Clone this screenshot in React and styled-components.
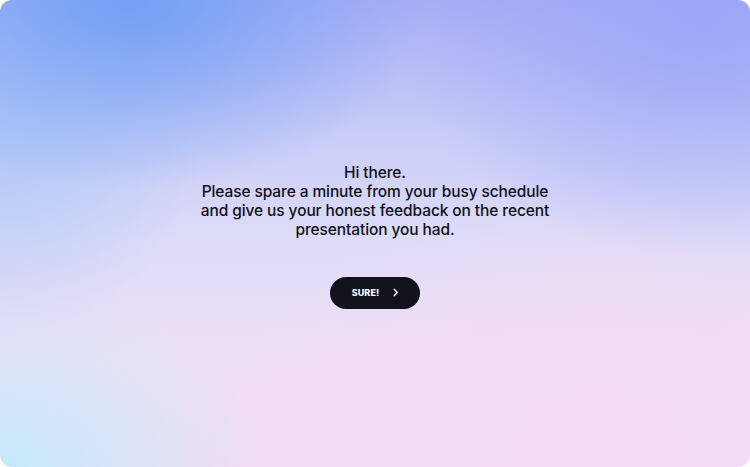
import React from 'react';
import styled, { createGlobalStyle } from 'styled-components';

const Global = createGlobalStyle`
  html, body { margin: 0; padding: 0; background: #ffffff; }
  #root { width: 750px; height: 467px; }
`;

const Screen = styled.div`
  width: 750px;
  height: 467px;
  border-radius: 12px;
  overflow: hidden;
  display: flex;
  flex-direction: column;
  align-items: center;
  justify-content: center;
  box-sizing: border-box;
  padding-top: 4px;
  background:
    radial-gradient(ellipse 300px 190px at 130px 0px, rgba(112, 160, 245, 0.95), rgba(112, 160, 245, 0) 100%),
    radial-gradient(ellipse 200px 200px at 0px 140px, rgba(170, 200, 248, 0.8), rgba(170, 200, 248, 0) 100%),
    radial-gradient(ellipse 300px 240px at 700px 20px, rgba(152, 164, 247, 0.85), rgba(152, 164, 247, 0) 100%),
    radial-gradient(ellipse 260px 180px at 0px 467px, rgba(196, 234, 250, 1), rgba(196, 234, 250, 0) 100%),
    radial-gradient(ellipse 380px 240px at 600px 430px, rgba(244, 218, 242, 1), rgba(244, 218, 242, 0) 100%),
    linear-gradient(180deg, #a9aef5 0%, #c8ccf7 28%, #dedcf8 52%, #eedff5 78%, #f1dcf3 100%);
`;

const Message = styled.p`
  margin: 0;
  font-family: "Inter", "Noto Sans", sans-serif;
  font-size: 15.5px;
  line-height: 19px;
  font-weight: 500;
  color: #101018;
  text-align: center;
  letter-spacing: -0.1px;
`;

const Button = styled.button`
  margin-top: 38px;
  width: 90px;
  height: 32px;
  border: none;
  border-radius: 16px;
  background: #11121c;
  color: #ffffff;
  display: flex;
  align-items: center;
  justify-content: center;
  gap: 12px;
  padding: 0 0 0 2px;
  font-family: "Inter", "Noto Sans", sans-serif;
  font-size: 9px;
  font-weight: 800;
  letter-spacing: 0.1px;
  cursor: pointer;
`;

const Chevron = () => (
  <svg width="9" height="9" viewBox="0 0 10 10" fill="none">
    <path d="M3.5 1.5 L7 5 L3.5 8.5" stroke="#fff" strokeWidth="1.6" strokeLinecap="round" strokeLinejoin="round" />
  </svg>
);

export default function App() {
  return (
    <>
      <Global />
      <Screen>
        <Message>
          Hi there.<br />
          Please spare a minute from your busy schedule<br />
          and give us your honest feedback on the recent<br />
          presentation you had.
        </Message>
        <Button>
          SURE!
          <Chevron />
        </Button>
      </Screen>
    </>
  );
}
